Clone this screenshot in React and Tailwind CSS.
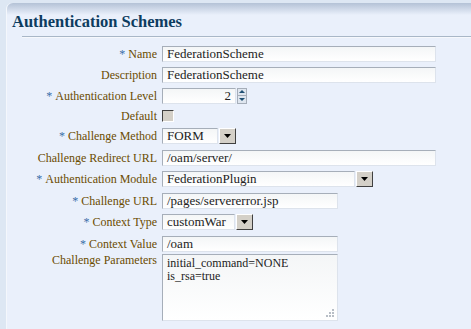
import React from 'react';

function Label({ text, required }) {
  return (
    <div className="w-[155px] shrink-0 pr-[5px] text-right text-[12px] leading-none text-[#6b4c00] whitespace-nowrap">
      {required && <span className="text-[#3b6ea8] mr-[3px]">*</span>}
      {text}
    </div>
  );
}

function Box({ width, children, className = '' }) {
  return (
    <div
      className={`h-[16px] border border-t-[#a6aeb9] border-l-[#a6aeb9] border-r-[#dde3ec] border-b-[#dde3ec] bg-gradient-to-b from-[#f4f6f7] to-white flex items-center px-[4px] text-[13px] text-[#222] whitespace-nowrap overflow-hidden ${className}`}
      style={{ width }}
    >
      {children}
    </div>
  );
}

function DropButton() {
  return (
    <div className="w-[17px] h-[16px] ml-[1px] bg-[#d4d0c8] border border-t-white border-l-white border-r-[#404040] border-b-[#404040] flex items-center justify-center">
      <svg width="7" height="4" viewBox="0 0 7 4">
        <path d="M0 0h7L3.5 4z" fill="#000" />
      </svg>
    </div>
  );
}

function Select({ value, boxWidth }) {
  return (
    <div className="flex items-center">
      <Box width={boxWidth}>{value}</Box>
      <DropButton />
    </div>
  );
}

function Row({ h, label, required, children, top }) {
  return (
    <div className={`flex ${top ? 'items-start' : 'items-center'}`} style={{ height: h }}>
      <Label text={label} required={required} />
      {children}
    </div>
  );
}

export default function App() {
  return (
    <div className="w-[471px] h-[329px] overflow-hidden bg-[#dde7f3] pt-[3px] pl-[6px] font-['Liberation_Serif','Times_New_Roman',serif]">
      <div className="h-full rounded-tl-[6px] bg-[#eaf0fb] border-l border-[#f4f7fc] relative">
        <div className="absolute inset-x-0 top-0 h-[12px] rounded-tl-[6px] bg-gradient-to-b from-[#b4c2d6] to-[#eaf0fb]" />
        <div className="relative pt-[9px] pl-[5px] text-[16.5px] font-bold text-[#0d3c5f] leading-[20px]">
          Authentication Schemes
        </div>
        <div className="relative mt-[4px] ml-[15px] h-[2px] bg-[#a9b7c7] border-b border-[#f6f8fc]" />
        <div className="relative mt-[5px] flex flex-col">
          <Row h={21} label="Name" required>
            <Box width={274}>FederationScheme</Box>
          </Row>
          <Row h={21} label="Description">
            <Box width={274}>FederationScheme</Box>
          </Row>
          <Row h={21} label="Authentication Level" required>
            <Box width={74} className="justify-end">2</Box>
            <div className="ml-[1px] flex flex-col w-[10px] h-[16px]">
              <div className="h-[8px] bg-[#dfe6ef] border border-[#a6aeb9] flex items-center justify-center">
                <svg width="6" height="3" viewBox="0 0 6 3"><path d="M0 3h6L3 0z" fill="#1f4f73" /></svg>
              </div>
              <div className="h-[8px] bg-[#dfe6ef] border border-t-0 border-[#a6aeb9] flex items-center justify-center">
                <svg width="6" height="3" viewBox="0 0 6 3"><path d="M0 0h6L3 3z" fill="#1f4f73" /></svg>
              </div>
            </div>
          </Row>
          <Row h={19} label="Default">
            <div className="w-[12px] h-[12px] bg-[#d4d0c8] border border-t-[#404040] border-l-[#404040] border-r-white border-b-white" />
          </Row>
          <Row h={22} label="Challenge Method" required>
            <Select value="FORM" boxWidth={56} />
          </Row>
          <Row h={21} label="Challenge Redirect URL">
            <Box width={274}>/oam/server/</Box>
          </Row>
          <Row h={22} label="Authentication Module" required>
            <Select value="FederationPlugin" boxWidth={193} />
          </Row>
          <Row h={21} label="Challenge URL" required>
            <Box width={176}>/pages/servererror.jsp</Box>
          </Row>
          <Row h={22} label="Context Type" required>
            <Select value="customWar" boxWidth={73} />
          </Row>
          <Row h={21} label="Context Value" required>
            <Box width={176}>/oam</Box>
          </Row>
          <Row h={70} label="Challenge Parameters" top>
            <div className="relative w-[176px] h-[67px] border border-t-[#a6aeb9] border-l-[#a6aeb9] border-r-[#dde3ec] border-b-[#dde3ec] bg-gradient-to-b from-[#f4f6f7] to-white px-[4px] pt-[2px] text-[12px] leading-[13px] text-[#222]">
              <div>initial_command=NONE</div>
              <div>is_rsa=true</div>
              <svg className="absolute right-[3px] bottom-[3px]" width="9" height="9" viewBox="0 0 9 9">
                <rect x="7" y="1" width="2" height="2" fill="#b8bec6" />
                <rect x="4" y="4" width="2" height="2" fill="#b8bec6" />
                <rect x="7" y="4" width="2" height="2" fill="#b8bec6" />
                <rect x="1" y="7" width="2" height="2" fill="#b8bec6" />
                <rect x="4" y="7" width="2" height="2" fill="#b8bec6" />
                <rect x="7" y="7" width="2" height="2" fill="#b8bec6" />
              </svg>
            </div>
          </Row>
        </div>
      </div>
    </div>
  );
}
